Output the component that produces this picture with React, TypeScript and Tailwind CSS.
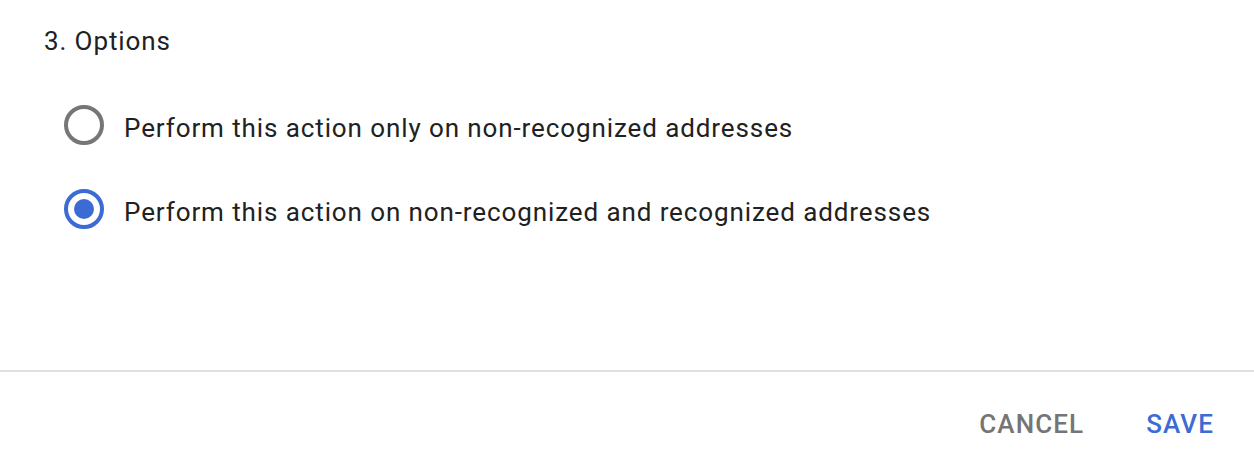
import React from "react";

function Radio({ checked, label }: { checked: boolean; label: string }) {
  return (
    <div className="flex items-center h-[40px]">
      <div
        className={
          checked
            ? "w-[40px] h-[40px] shrink-0 rounded-full border-[4px] border-[#3b6bd3] flex items-center justify-center"
            : "w-[40px] h-[40px] shrink-0 rounded-full border-[4px] border-[#767676]"
        }
      >
        {checked && <div className="w-[20px] h-[20px] rounded-full bg-[#3b6bd3]" />}
      </div>
      <span className="ml-[20px] pt-[6px] text-[26px] leading-[32px] tracking-[0.9px] text-[#212121] whitespace-nowrap">
        {label}
      </span>
    </div>
  );
}

export default function App() {
  return (
    <div
      className="w-[1254px] h-[462px] bg-white flex flex-col"
      style={{ fontFamily: "Roboto, 'Noto Sans', sans-serif" }}
    >
      <div className="h-[370px] pt-[25px] pl-[44px]">
        <div className="text-[26px] leading-[32px] tracking-[0.9px] text-[#212121]">3. Options</div>
        <div className="mt-[48px] ml-[20px] flex flex-col gap-[44px]">
          <Radio checked={false} label="Perform this action only on non-recognized addresses" />
          <Radio checked={true} label="Perform this action on non-recognized and recognized addresses" />
        </div>
      </div>
      <div className="h-[2px] bg-[#e0e0e0]" />
      <div className="flex-1 flex justify-end items-start pt-[36px] pr-[40px] gap-[62px]">
        <span className="text-[26px] leading-[32px] tracking-[1.1px] font-medium text-[#757575]">CANCEL</span>
        <span className="text-[26px] leading-[32px] tracking-[1.1px] font-medium text-[#3b6bd3]">SAVE</span>
      </div>
    </div>
  );
}
